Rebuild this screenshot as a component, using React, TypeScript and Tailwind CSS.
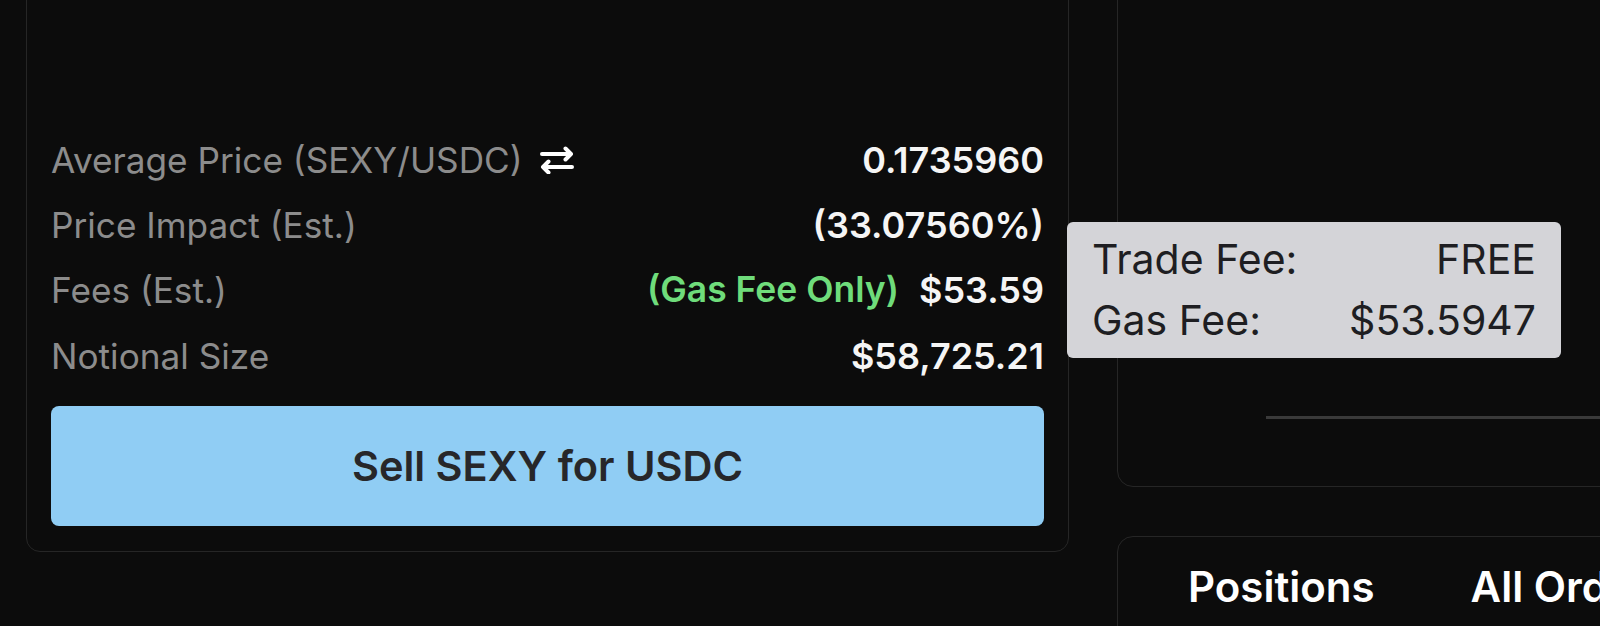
import React from 'react'

type Row = {
  label: string
  icon?: boolean
  value: string
  note?: string
}

const rows: Row[] = [
  { label: 'Average Price (SEXY/USDC)', icon: true, value: '0.1735960' },
  { label: 'Price Impact (Est.)', value: '(33.07560%)' },
  { label: 'Fees (Est.)', note: '(Gas Fee Only)', value: '$53.59' },
  { label: 'Notional Size', value: '$58,725.21' },
]

function SwapIcon() {
  return (
    <svg width="36" height="28" viewBox="0 0 36 28" fill="none" stroke="white" strokeWidth="4" strokeLinecap="round" strokeLinejoin="round">
      <path d="M3 8H32M26.5 2.5L32 8L26.5 13.5" />
      <path d="M33 21H4M9.5 15.5L4 21L9.5 26.5" />
    </svg>
  )
}

function SummaryCard() {
  return (
    <div className="-mt-[40px] w-[1043px] shrink-0 rounded-[14px] border border-[#262626] px-[24px] pb-[25px] pt-[166px]">
      <div className="flex flex-col">
        {rows.map((r) => (
          <div key={r.label} className="flex h-[65.4px] items-center justify-between leading-[44px]">
            <div className="flex items-center gap-[16px] text-[35.2px] text-[#8c8c8c]">
              <span>{r.label}</span>
              {r.icon ? <SwapIcon /> : null}
            </div>
            <div className="flex items-center gap-[20px] text-[36px] font-semibold">
              {r.note ? <span className="text-[35.5px] text-[#6fdc7b]">{r.note}</span> : null}
              <span className="text-[#f5f5f5]">{r.value}</span>
            </div>
          </div>
        ))}
      </div>
      <button className="mt-[17.4px] flex h-[120px] w-full items-center justify-center rounded-[8px] bg-[#90cdf4] text-[41.5px] font-semibold text-[#27272a]">
        Sell SEXY for USDC
      </button>
    </div>
  )
}

function FeeTooltip() {
  return (
    <div className="absolute left-[1067px] top-[222px] h-[136px] w-[494px] rounded-[6px] bg-[#d4d4d8] px-[25px] py-[7px] text-[41px] leading-[61px] text-[#1e1e22]">
      <div className="flex justify-between">
        <span>Trade Fee:</span>
        <span>FREE</span>
      </div>
      <div className="flex justify-between">
        <span>Gas Fee:</span>
        <span>$53.5947</span>
      </div>
    </div>
  )
}

export default function App() {
  return (
    <div className="relative h-[626px] w-[1600px] overflow-hidden bg-[#0c0c0c] font-['Inter',sans-serif]">
      <div className="flex items-start gap-[48px] pl-[26px]">
        <SummaryCard />
        <div className="flex w-[720px] shrink-0 flex-col gap-[49px]">
          <div className="-mt-[40px] flex h-[527px] flex-col justify-end rounded-[16px] border border-[#262626]">
            <div className="mb-[67px] ml-[148px] h-[3px] bg-[#3a3a3a]" />
          </div>
          <div className="h-[200px] rounded-[16px] border border-[#262626] px-[22px] pt-[20px]">
            <div className="flex whitespace-nowrap text-[42px] font-semibold leading-[60px] text-white">
              <div className="shrink-0 px-[48px]">Positions</div>
              <div className="shrink-0 px-[48px]">All Orders</div>
            </div>
          </div>
        </div>
      </div>
      <FeeTooltip />
    </div>
  )
}
